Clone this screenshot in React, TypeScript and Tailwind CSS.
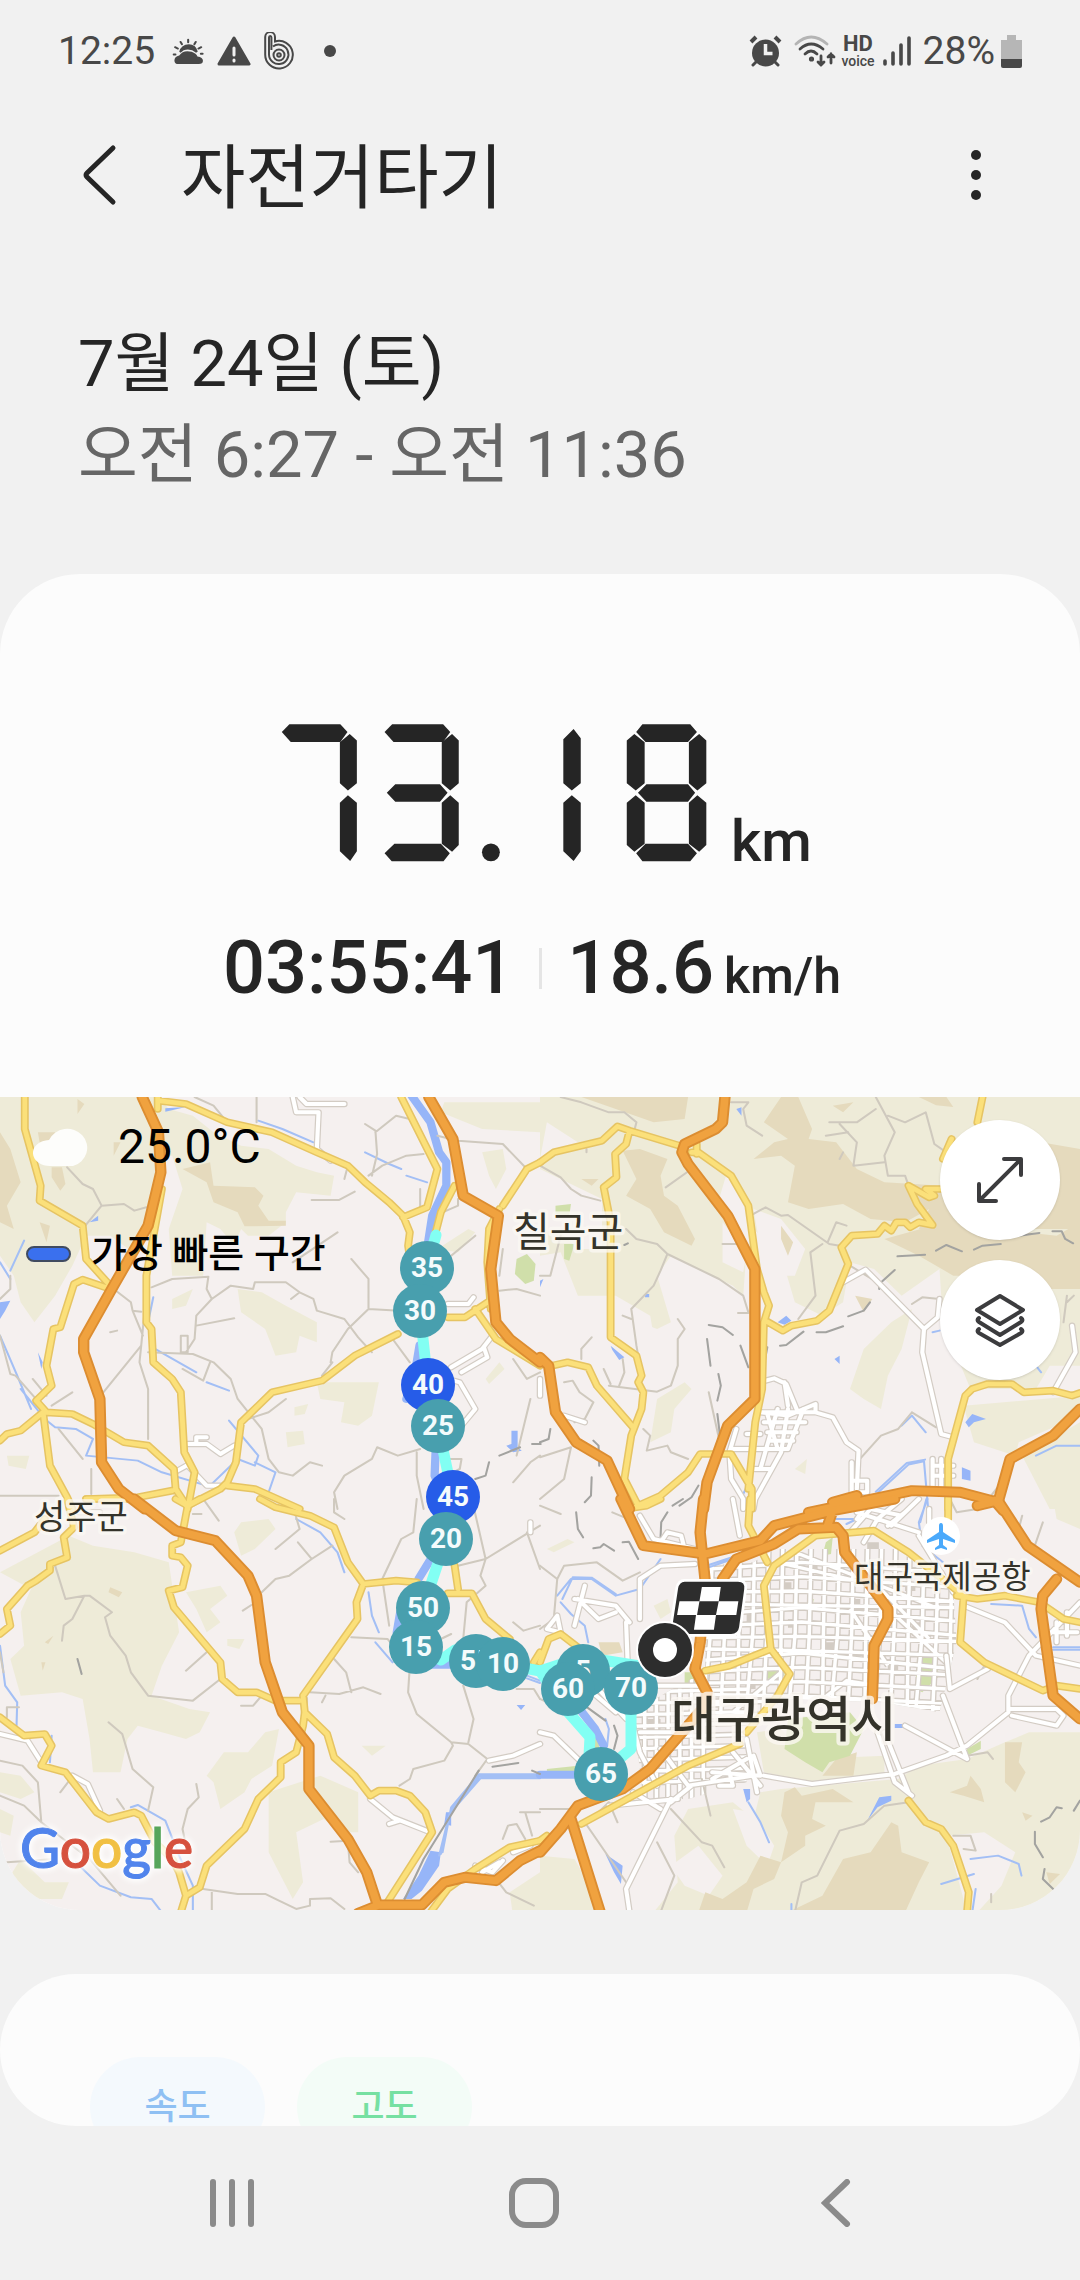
import React from "react";

const FONT = "font-[Roboto,'Noto_Sans_CJK_KR',sans-serif]";

/* ---------- map data ---------- */

interface Tile {
  transform: string;
  hills: string;
  bare?: string;
  ridges: string;
  parks?: string;
  lakes: string;
  rivers: string;
  streams: string;
  lanes: string;
  rails: string;
  streets: string;
  roads: string;
  highways: string;
}

const cityGrid = [
  ...Array.from({ length: 18 }, (_, i) => `M${500 + i * 41} 150L${495 + i * 41} 400L${474 + i * 41 + (i % 3) * 9} 660`),
  ...Array.from({ length: 14 }, (_, i) => `M470 ${212 + i * 34}L760 ${190 + i * 34 + (i % 4) * 9}L1240 ${224 + i * 34 + (i % 3) * 9}`),
  ...Array.from({ length: 7 }, (_, i) => `M${270 + i * 34} 540V900`),
  ...Array.from({ length: 9 }, (_, i) => `M260 ${580 + i * 34}L600 ${570 + i * 34}`),
  "M690 190L980 260 1130 420M740 160L1160 330M560 640L700 520M980 300L1210 520M820 600L890 545 980 560M1010 500L900 330",
].join("");

const blocks = [
  "M520 240h30v26h-30z", "M600 340h28v30h-28z", "M700 250h30v30h-30z", "M720 360h26v26h-26z", "M830 430h30v24h-30z",
  "M900 300h30v26h-30z", "M780 200h26v26h-26z", "M1060 250h30v26h-30z", "M1080 370h26v40h-26z", "M1010 490h30v30h-30z",
  "M800 540h30v20h-30z", "M600 540h26v30h-26z", "M310 590h28v24h-28z", "M300 660h50v34h-50z", "M950 130h34v20h-34z",
].join("");

const tiles: Tile[] = [
  {
    transform: "translate(0 -8) scale(.3444 .3333)",
    hills:
      "M0 24H460L490 60 560 80 620 130 700 170 780 180 860 230 920 250 970 260 960 320 860 310 830 370 830 400 780 440 720 440 700 420 680 470 640 420 600 400 590 560 500 560 490 420 530 300 500 200 470 200 465 300 420 440 400 500 320 440 250 440 210 530 160 620 100 700 60 640 40 560 0 500ZM690 600L760 610 830 650 920 700 920 760 870 740 860 790 800 800 770 720 700 670ZM920 880L1100 880 1080 980 1040 1010 990 1000 1000 940 930 930ZM1290 40H1568V130L1400 120 1280 70ZM830 1030l50-5 5 40-50 10zM500 630l60-30-20 50-40 10zM1410 870l40-50 15 20-45 45zM1400 190l60-10 10 60-30 60-20-40zM20 1100h65l-10 40-50-10zM1270 480l90-60 20 10-50 60zM855 955l40-10-10 30-30 5z",
    ridges:
      "M0 130L30 180 60 280 20 350 40 420 0 400ZM530 240L610 220 620 290 740 295 765 320 750 350 780 395 830 395 830 410 710 412 690 370 620 340 600 280ZM150 235h30l10 50-15 20-25-40zM115 400l30 10-10 50zM225 30l20 15-20 30zM330 160h20l-20 40zM110 130h50v40l-40 20z",
    parks: "M1500 510l30-15 25 30-5 50-25 10-30-30z",
    lakes: "M260 400l25-20v15zM0 640l30-5-15 30-15 25zM1485 1025h18v50l12 10-25 5-20-20 15-5zM480 58l60-4-60 14zM110 790l14 30-4 20z",
    rivers: "M1195 20L1250 100 1275 190 1296 220 1296 290 1255 380 1240 480M1218 770L1205 850 1180 930M1265 1080L1262 1160 1300 1260",
    streams:
      "M70 455L30 545M445 625L430 700M60 900L130 990 160 1015 220 1020 270 1050 250 1100 400 1115 470 1150 600 1190M600 880L665 905M665 995L750 1100 740 1130 690 1110 610 1190M740 1120L800 1150 780 1210M1060 190L1130 225 1165 240M1180 260l60 20M750 95l70 25 90 40M0 740L50 860 90 960M450 780L570 850M0 520L30 570",
    lanes:
      "M195 235L240 285 270 300 295 350 360 345 390 365 425 355M295 350L240 420M565 24L620 50 660 100M745 24V100M1080 260L1095 195 1090 125 1060 105M1090 130L1150 80 1190 90M1070 260L1110 230 1180 200 1230 195M1000 270L1010 230M905 333H985L1030 308M1270 140L1330 155 1460 165 1530 240M440 595L500 570 605 563 600 600 615 630 570 680 565 750 540 790M615 630L670 590 735 600 740 580 830 580 870 610 910 630 920 665 1000 690 1040 745 1080 790M870 610L845 630M570 710L680 688M430 560L410 770 405 820 430 900V1050M330 600L380 640 385 665 410 668M385 665L415 740M410 770L300 910M430 790L560 795 620 820 670 870 690 930 760 1020 780 1110 810 1150M610 820L590 875 530 840M960 820L965 790 1010 720 1070 660 1160 665M1070 660V570L1020 510M830 930L780 970 720 990M935 860l30-40M850 520L980 430M0 740L30 855 45 860 130 960M170 1020L240 1110M265 1140V1215M0 1220H170M980 1260L970 1210 1000 1160 1080 1110 1095 1075 1155 1100 1220 1080M810 1150L850 1160 900 1120 935 1130M1220 300V370M1140 750L1190 820M1210 1090V1160L1230 1260M1460 480L1450 560M1450 605L1500 600 1568 620M1330 330v20l-45 20M1310 500l70-60M1490 810L1530 870 1568 850M1500 1100L1540 930M1490 1180L1540 1120 1568 1100M1300 1110h40l-5 30-20 10M320 730l20-5M95 870l40 50M150 950l60-40M30 560L30 600 0 630M525 740v50h20v-50z",
    rails: "M1420 1120L1410 1160 1380 1170M1450 1100L1510 1075M1545 1065h25",
    streets:
      "M850 24L860 70H925L920 180 960 215M870 24L890 45H1000M1300 645H1360L1375 625M1310 835L1400 780 1430 740M1340 850L1415 805 1405 775M1300 870L1335 880 1380 960 1340 1010M545 1065H600L640 1095 680 1070M570 1065V1045H600M545 1130L600 1190 640 1190M515 1145l35-20",
    roads:
      "M72 24V120L118 290 115 335 240 410 250 510 320 590M320 600L240 572 215 585 175 715 155 720 135 830 150 890 105 935 135 970 210 975 270 1005 360 1060 430 1070 505 1140 510 1200 545 1255M458 24V60M125 970L60 1025 20 1035 0 1055M125 970L145 1130 195 1225 210 1260M470 300L425 560V700L440 720 445 820 500 870 525 910 535 1090 565 1150 545 1260M460 35L540 45 660 100 790 130 920 190 1010 230 1060 280 1130 340 1170 380 1190 430 1185 470 1195 540M1165 24L1270 240 1240 355 1170 385M1320 290L1280 370 1265 430M1568 220L1530 240 1460 350M1450 360L1420 420 1415 520 1425 660M1155 735L1030 800 935 875 790 910 700 1000 685 1120 660 1180 640 1200 545 1250M1300 685H1350L1415 640M1380 660L1440 750 1568 830M250 1230L400 1225 500 1205M660 1190L740 1200 870 1260",
    highways:
      "M413 24L460 130 467 250 430 410 330 590 243 750 243 790 290 930 295 1120 345 1200 420 1260M1245 24L1315 150 1345 320 1447 380 1425 540 1440 700 1480 750 1568 820",
  },
  {
    transform: "translate(540 -8) scale(.3444 .3333)",
    hills:
      "M0 24H1568V830L1480 830 1440 900 1250 900 1170 700 1160 540 1050 620 970 540 900 520 880 640 820 680 740 640 700 500 620 420 600 320 540 260 520 330 600 480 590 620 560 590 380 500 340 560 250 620 110 620 60 490 0 500ZM210 590L340 560 380 700 340 720 240 680zM900 900l40-120 80-80 60-40-30 120-40 80-20 100-50-30zM320 1060L340 930 420 880 440 900 390 960 380 1030zM1230 950L1568 920V980L1390 1060 1380 1100 1260 1060ZM1400 1100L1568 1000V1260H1480zM740 1140l35-30-5 45z",
    bare: "M0 240L100 290 180 330V480L110 480 60 430 0 420ZM20 100l90 60 60-10-100 40-70 20zM620 360L700 390 770 480 740 560 700 560 640 480ZM530 400l70 90-10 60-60-30zM220 620l100 60 10 60-90 20z",
    ridges:
      "M120 24H430L420 90 330 100 220 60ZM700 24H750L790 120 780 150 860 160 920 240 1000 280 1170 290 1200 400 1130 360 1060 400 960 390 880 345 780 360 720 340 740 230 700 200 620 210 680 160 720 150 650 100ZM240 185L290 180 370 210 350 260 360 320 400 350 450 450 440 470 360 430 320 360 250 320 280 270ZM1000 450L1140 410 1230 410 1500 440 1568 400V600L1480 600 1420 560 1300 560 1200 560 1100 500ZM1400 150L1568 180V420H1100L1160 300ZM700 410l35 50-15 40-20-50zM915 620l50 10-25 40zM850 50l60-10-30 30zM120 270l50 0-20 20zM1100 24h80l20 30-50-5z",
    parks: "M45 350l45-5-5 35-40-5zM70 465h30l-15 50-15-5z",
    lakes: "M205 770l40 35-15 8-20-30zM690 700l25-20 15 15-20 12zM855 810l15-10v25zM1235 1000l20-25 40 15-35 10-15 15zM1225 1135l25 10v30l-25-5zM0 575l10-5-10 25zM570 60l15-5v25zM305 615h12v10h-12z",
    rivers: "",
    streams: "M980 1212L1070 1127 1115 1117 1127 1260M975 1208L1065 1122 1118 1112M1050 1010l30-30 40 50M1440 1100l60-30H1568M1440 830l15 20M1140 730l20-5M590 1215l10-20",
    lanes:
      "M60 24L120 40 200 70 245 70 280 100 275 120M365 295L440 240M0 230L60 265 90 300 120 320 175 335M250 420L280 450 340 465 370 495 520 570 590 620 605 670M370 495L350 545 330 590 265 660 280 770 285 800M620 375L655 355 700 380 720 378 840 465 870 470M820 465L785 490 800 620 750 690M835 460L860 400 890 410M975 24L1030 130 1000 200 1010 260H1060L1070 290M840 100H920L975 60M870 105L920 160 910 230 1000 220M830 140L895 130M1010 80L1060 100 1120 70 1145 165 1180 190M555 40H605L590 60 600 110 645 140M120 810V780L150 745M240 810L245 850 230 890M400 690L420 720 400 750V830L380 890 340 908 200 890M185 840l20 45M240 680l25 10M70 880L95 875 115 910 155 940 130 990 100 1000M300 1020L320 1040 310 1085 370 1070 380 1090 430 1110M0 1105L90 1075 70 1170 0 1230M490 910L520 1050M1080 645L1110 625 1160 630M1080 970L1150 1015M1080 970L1040 1020 990 1040 920 1120M1340 1180L1310 1220M1530 620L1520 700M1530 640l20-20M530 465h50M575 672h30M880 190l-10 20M900 530l80 50M135 180v10M60 440L30 560 0 560",
    rails:
      "M490 708L530 715 560 738M485 750L495 830M518 855L525 890 515 935M515 975L522 1035M582 770L605 835M660 775L652 820M697 770L715 768 765 728M803 730H830L880 712M895 682L940 665 958 640M985 600V585L1030 543M1038 502L1118 497M1150 485L1180 468 1225 487M1260 482L1285 470 1338 465M1488 427H1515L1525 450 1548 463M155 1055L170 1070 172 1130M150 1165L148 1220 130 1240M460 1190L440 1225 405 1250M30 1020L25 1050 0 1060M1390 440L1450 432M245 468l10-5",
    streets:
      "M880 580L945 542 1115 720 1110 790 1165 1035 1200 1045M1115 720L1155 685 1160 630M1490 910L1555 790 1545 710M655 875L680 868 715 885 745 960M640 970L720 980 800 945V970L850 985 890 1060 925 1085 920 1200M570 1020L550 1090 555 1170 590 1230V1260M645 970H800M650 1000H770M660 1030H745M560 1080H720M670 1055H735M690 960L640 1140M720 960L700 1090 625 1230 620 1260M765 960L720 1080M660 975L690 1080M610 1140H670M1140 1110V1200M1165 1110V1200M1140 1130H1200M1140 1160H1200M905 1120V1210H950V1175H905M0 870v50M70 980l60 20M600 1035h40M710 880l10 70",
    roads:
      "M0 220L40 190 180 155 225 112 260 125 420 175M260 125L250 165 218 195 222 265 185 295 205 400V745L280 800 295 860 285 880 300 910 295 960 265 1040 245 1170 285 1250M35 830L80 820 140 835 165 890 270 1015M440 190L460 190 555 260 605 350 630 540 650 610 665 650 650 700 645 900 625 1000 605 1200M455 165V195M655 695L705 725 730 710 805 695 840 665 895 525 875 475 905 440 980 435 1000 410 1020 425 1035 400 1060 400 1075 415 1100 400 1140 408 1095 345 1070 290 1130 325 1145 320 1120 300H1165M1285 24L1270 100M1195 150L1170 210M285 1250L350 1220 430 1150 465 1095H555L615 1200V1260M1185 1260V1110L1235 920 1255 900 1300 885 1370 885 1405 910 1490 905 1545 920 1568 912",
    highways:
      "M537 24L530 100 510 120 420 165 412 190 430 225 545 380 624 540V930L545 1010 485 1180 475 1260M0 805L25 830 45 970 105 1060 195 1115 260 1260M780 1270L1080 1205 1220 1210 1330 1240 1365 1110 1490 1040 1568 960M850 1240L920 1220M1320 1235L1345 1265",
  },
  {
    transform: "translate(0 402) scale(.3444 .3333)",
    hills:
      "M0 220L110 160 200 110 270 140 390 160 490 190 520 400 470 500 440 590 550 630 610 640 580 700 540 720 470 700 400 680 370 720 350 820 270 820 260 720 240 600 180 580 60 590 30 480 70 440 60 340 90 270zM700 70L780 60 800 90 740 150 700 170 680 100ZM540 280L640 260 660 290 610 330 640 370 600 400 570 330ZM600 830L650 760 720 760 770 700 810 690 790 800 730 840 710 880 640 930 620 850zM780 880L930 830 1040 880 1040 1000 990 1000 940 960 860 1000 880 1150 850 1200 780 1060ZM0 820L60 830 100 880 60 900 0 880ZM60 1080L130 1150 200 1150 180 1200 100 1200 30 1130ZM1480 1180l88-60V1240h-80zM1050 740h70l-40 30zM660 420h50l-15 30-35-10zM0 930L40 950 30 1010 0 1000z",
    ridges: "M320 265l35 15-10 15-30-15zM130 430l25-20-15 25zM120 490h12l-8 25z",
    lakes: "M1215 1130L1250 1055 1280 1060 1275 1100 1225 1175 1195 1200H1170ZM1500 618h25l-12 15zM1295 940l15 0v40l-20-5z",
    rivers: "M1248 185L1215 240M1162 340L1152 400M1250 497H1320",
    streams:
      "M0 440L15 560 50 610 48 680M150 710L145 790M380 925L400 918 480 965 520 1070 560 1160V1240M220 1090L290 1160 380 1195 440 1200 470 1240M1070 280L1080 350 1100 400M1090 430L1140 490M860 60L930 100 980 160 1000 220M1568 826H1390L1310 925 1285 1060M1568 832H1392L1310 932 1280 1065M1568 838H1395L1305 945 1275 1070M1530 530L1568 545M1530 538L1568 552",
    lanes:
      "M160 200L190 300 245 290 210 360 185 380 180 425M245 290H260L325 340 305 355 320 410 365 470 380 520 430 590 560 605 640 540M540 515L600 460M315 670L355 705 385 810 445 865 430 935M570 855L577 895 545 930 530 990 540 1040M700 620H735L760 590M705 335L730 318M760 280L800 240 840 230 905 180 965 140M865 130L905 180M970 0V40L1000 60M850 20L870 90 800 150M590 0L635 65M560 45h25M1210 0L1200 100 1165 120 1110 240 1130 380M1370 0L1390 90 1410 180 1395 230 1410 260 1355 310 1345 420M1410 180L1568 80M1330 200L1410 180M1020 415L1125 420 1190 500 1185 580 1210 645 1310 730 1360 735 1415 780 1380 830M1345 560L1375 660 1360 730M1310 730L1315 740 1290 785 1200 810 1190 840 1160 860M900 580L985 585 1055 565 1105 585M970 480L1005 520 1020 580M935 610l10-20M590 1170L690 1185H770L810 1205 860 1230 900 1220V1200L960 1198 1000 1230M615 1175V1240M0 785L65 800 110 850 120 970 260 1080 350 1190M0 890L70 920 120 970M20 1090L160 1080M175 880l30-40M340 900L360 930M960 1028L1010 1025 1015 1090 1040 1120M1510 940H1568M1525 940L1545 1010M1460 1020L1475 980 1500 975 1525 1020M1410 1100l60 80 80 40M1490 370L1520 395 1568 380M20 655V625H55M1530 100L1568 210M1500 570h50l18 30M1280 420l30-15M0 460l10 60",
    rails: "M1430 803L1505 792M1545 815L1568 825M1390 815L1230 1080 1175 1200M225 480L237 525",
    streets:
      "M0 705L80 725 120 790M210 830L255 855 290 935M1075 900L1140 955 1250 1000M1130 975L1160 965M1420 785L1490 770 1568 735M1540 70V100M885 600V640M230 40h60M1380 1100L1430 1120 1460 1085M1400 1120l50-30M1490 1060l50-20",
    roads:
      "M0 155L100 100 130 60M215 85L185 115 195 175 145 195 145 215 105 245 80 260 20 330 30 380 0 405M195 0L215 85M510 0L545 20 525 130 500 140 500 170 525 175 545 200 530 265 490 275 505 325 640 490 645 540 690 580H745L800 605 870 605M545 20L580 0M755 0L800 25 900 50 970 85 1010 190 1055 255 1150 245 1210 250M1055 255L1035 310 1038 360 880 590 885 640 880 680 860 760 815 790V835L750 900 710 990 600 1100 580 1165 540 1190 525 1240M885 640L950 705 970 775 1030 830 1075 890 1100 875H1150L1190 890 1235 940 1255 1000 1125 1210M1320 200L1330 270M1300 283H1370L1410 360 1480 420M0 655L70 710 130 705 150 740 120 800 190 820 280 940 315 960 390 940 410 950 450 1030 500 1080 520 1120 540 1190M1250 1240L1300 1170 1380 1110 1480 1045 1568 1025M1568 460L1550 490M250 0L400 0",
    highways:
      "M390 0L510 95 625 125 720 230 745 290 770 490 820 640 897 740V870L1010 1020 1065 1120 1095 1215M1040 1243L1100 1218H1225L1290 1150 1350 1135 1440 1145 1510 1085 1568 1055",
  },
  {
    transform: "translate(540 402) scale(.3444 .3333)",
    hills:
      "M430 930L560 910 620 960 640 880 700 870 1040 840 1100 800 1240 780 1350 730 1420 700 1568 700V1240H330L400 1150 390 1010ZM0 1070L100 1080 190 1240H0zM630 700L700 690 780 780 1000 770V820L800 850 650 820ZM1490 0H1568V90L1500 60ZM20 150l60-30 20 10-60 30zM330 320l40-20 10 40-30 20z",
    bare: "M1180 1010L1290 1000 1380 1060 1340 1160 1270 1240H1240zM380 1100l80-60 70 90-40 60-70-30zM560 930l60 10 60 100-20 60-60-60z",
    ridges:
      "M710 880L740 865 760 890 850 870 910 910 800 910 790 960 830 980 770 1010 770 1040 700 1090 680 1140 620 1170 600 1240H460L480 1180 530 1200 600 1150 640 1070 700 1090 720 1000 700 950ZM1020 970L1040 980 1050 1060 1130 1090 1100 1150 1060 1240H720L820 1190 880 1080 960 1060zM1190 880L1240 860 1250 830 1280 870 1290 910 1230 890zM1350 730h50l-10 60 20 30-30 60-30-30zM820 830L860 780 920 760 910 830zM1400 940l30 10-20 15zM170 430h60l10 30-60 10zM1470 1120l40 5-30 30z",
    parks:
      "M710 750L720 660 900 640 940 690 900 770 840 790 820 820 770 790ZM1095 470L1140 460 1160 530 1110 580 1090 570ZM650 510l60-15v35l-50 10zM830 130l20-15-5 50-25 5zM420 520h35v50l-35-5zM20 810l90-10v15l-90 5zM780 300h15l-5 25zM1240 750l40-25v25l-40 20zM150 715h25l-5 40h-20z",
    lakes: "M590 870h20v30l-10 10zM950 965L985 895 1020 890V905L980 925ZM190 1065L240 1100 235 1155 215 1120ZM1030 675h25v12h-25z",
    rivers: "M0 827H110M100 610L160 690 185 740",
    streams:
      "M50 290L90 240 150 240 220 290 290 270 350 180M60 310L90 345 130 380 140 430M65 300L95 235 150 236 220 285M490 205L560 180M490 198L560 174M860 60L920 60 890 75M1125 0L1100 70 1110 140 1170 190M1122 0L1104 70M1310 315L1400 320 1420 390 1440 415M1490 445H1568M1490 452H1568M0 540L30 560M190 660L200 690 195 740M605 910L640 970 665 1030M1250 1080L1330 1070 1390 1095 1398 1130M1165 1155L1260 1125M1265 1170L1255 1240M730 1240v-25",
    lanes:
      "M0 200L50 240 70 200 165 190 240 245 290 220M470 840L495 950M380 930L470 1030 500 1040 535 1105M340 1030L390 1130 350 1240M740 1240L760 1150 805 1130 870 995 940 975 1000 920 1070 910M1240 770L1300 760 1315 780M1200 1010L1250 1010 1265 1055 1230 1050M1400 50L1390 90M1460 70L1430 160M0 930H90M210 40L280 70 300 120M1310 1185V1210M130 970L250 1150M50 240L40 360 0 390M1190 0L1210 40 1270 30M1270 540L1290 500M0 20L60 45M130 980L200 910 225 970M0 600L80 640",
    rails:
      "M105 40L110 90 125 115M155 148L175 145 185 135 215 155M240 130L258 128 285 180M370 40L352 70 350 115M415 0l-30 20M1455 968L1480 955 1500 925 1515 928M1437 998V1035L1460 1075M1465 1110L1460 1140 1490 1170M1550 935l18-30M130 620l60 45M215 680l10 30-10 40",
    streets:
      "M650 830L790 855 1030 825 1180 770 1240 740 1360 640 1360 590 1420 470 1568 310M980 700L1030 850 1080 890M1000 700L1070 880M1360 630H1500L1520 650 1500 680 1370 650M1170 590L1240 780M1060 680L1240 780M1180 470L1190 570 1300 510M380 900L250 1170 260 1240M250 370L260 640 290 760 340 860M130 260L100 380M100 300L220 320 260 370M110 300l60 60 50-20M0 700L40 710 120 790M290 360V240L350 200 450 195M290 50L330 120 450 150M560 0L580 110M350 130l20-30 40 10 10 40M430 860L350 750M430 860L620 830M380 910L440 860M500 820L640 830M520 860H560L550 820M560 760L640 860M600 720L630 880M20 390L50 350 60 400ZM1230 320L1350 370 1440 470 1568 500M1480 400h80M1500 370V430M1530 340V410M920 40L1100 100M960 0L920 60M1050 0L980 60M1100 0L1020 80M900 100L960 30 1050 50M940 130L980 60M1010 80L1060 40M200 920L400 900M270 880L350 930M140 570L220 640M160 560L250 660M250 560H480M290 700H420M1100 110L1200 280M1130 30v40M640 830l-20-60M480 520V640M500 840l100-60",
    roads:
      "M0 490L25 420 60 405 110 445M275 25L310 20 350 0M610 0L605 80 660 190M480 515L550 500 670 450 650 260 680 200 800 110 970 95 1070 160 1230 290 1220 430 1290 490 1460 575 1500 560 1568 570M1210 290L1270 300 1350 290 1450 310 1520 360 1568 370M1185 0V60M670 450L725 525 690 590 600 700M580 735L430 800 200 930 120 975M1070 905L1120 970 1165 990 1200 1040 1245 1180 1240 1240M0 1025L20 1010",
    highways:
      "M235 0L300 140 480 165 640 125 680 80 850 35 1030 0M850 35L835 80M475 0L465 100 480 250 465 430 450 510 485 580 480 620 320 810 240 870 110 920 60 990 0 1060M90 960L175 1240M530 240L570 180 680 135 750 90 860 85 880 110 885 160 960 260 1010 330 1010 360 970 440 965 600M1270 20L1330 5 1415 140 1568 250M1500 240L1460 290 1455 330 1490 590 1568 660",
  },
];

const areas: { key: keyof Tile; fill: string }[] = [
  { key: "hills", fill: "#eeebd8" },
  { key: "bare", fill: "#f5f0ef" },
  { key: "ridges", fill: "#e5dabd" },
  { key: "parks", fill: "#d0dfaa" },
  { key: "lakes", fill: "#96b5f8" },
];

const lines: { key: keyof Tile; stroke: string; width: number }[] = [
  { key: "streams", stroke: "#a3bff5", width: 6 },
  { key: "rivers", stroke: "#96b5f8", width: 24 },
  { key: "lanes", stroke: "#cfc9be", width: 6 },
  { key: "rails", stroke: "#a3a3a0", width: 6 },
  { key: "streets", stroke: "#d3ccc4", width: 19 },
  { key: "streets", stroke: "#ffffff", width: 12 },
  { key: "roads", stroke: "#e6c463", width: 23 },
  { key: "roads", stroke: "#fbe07a", width: 14 },
  { key: "highways", stroke: "#dc8d31", width: 33 },
  { key: "highways", stroke: "#f0a23f", width: 22 },
];

const pins = [
  { km: 35, x: 427, y: 171 },
  { km: 30, x: 420, y: 214 },
  { km: 40, x: 428, y: 288, fast: true },
  { km: 25, x: 438, y: 329 },
  { km: 45, x: 453, y: 400, fast: true },
  { km: 20, x: 446, y: 442 },
  { km: 50, x: 423, y: 511 },
  { km: 15, x: 416, y: 550 },
  { km: 55, x: 476, y: 564 },
  { km: 10, x: 503, y: 567 },
  { km: 5, x: 583, y: 574 },
  { km: 60, x: 568, y: 592 },
  { km: 70, x: 631, y: 591 },
  { km: 65, x: 601, y: 677 },
];

function RouteMap() {
  return (
    <svg viewBox="0 0 1080 813" className="block w-full bg-[#f5f0ef]" role="img" aria-label="경로 지도">
      <clipPath id="city">
        <path d="M480 200L620 190 760 100 900 120 1000 120 1200 280 1210 430 1160 640 990 610 700 600 640 700 600 850 430 900 300 900 270 640 400 560 480 520Z" />
      </clipPath>
      {areas.map((a) => (
        <g key={a.key} fill={a.fill}>
          {tiles.map((t) => (
            <path key={t.transform} transform={t.transform} d={t[a.key] ?? ""} />
          ))}
        </g>
      ))}
      <g transform={tiles[3].transform} fill="none">
        <g clipPath="url(#city)">
          <path d={cityGrid} stroke="#d3ccc4" strokeWidth="18" />
          <path d={blocks} fill="#d3ccc4" />
          <path d={cityGrid} stroke="#fff" strokeWidth="10" />
        </g>
      </g>
      {lines.map((l) => (
        <g key={l.key + l.width} fill="none" stroke={l.stroke} strokeWidth={l.width} strokeLinejoin="round" strokeLinecap="round">
          {tiles.map((t) => (
            <path key={t.transform} transform={t.transform} d={t[l.key] ?? ""} />
          ))}
        </g>
      ))}

      {/* place names */}
      <g
        className={`${FONT} [paint-order:stroke]`}
        fill="#34332a"
        stroke="#fbf8f3"
        strokeOpacity="0.8"
        strokeLinejoin="round"
      >
        <text x="513" y="149" fontSize="40" strokeWidth="7">칠곡군</text>
        <text x="34" y="432" fontSize="34" strokeWidth="7">성주군</text>
        <text x="854" y="491" fontSize="32" strokeWidth="6">대구국제공항</text>
        <text x="671" y="640" fontSize="49" fontWeight="500" strokeWidth="8">대구광역시</text>
      </g>
      <circle cx="941" cy="439" r="19" fill="#fff" />
      <path
        d="M941 426c2 0 2 2 2 4v5l12 8v3l-12-4v6l4 3v2l-6-2-6 2v-2l4-3v-6l-12 4v-3l12-8v-5c0-2 0-4 2-4z"
        fill="#4aa9fb"
      />

      {/* route */}
      <path
        d="M436 138L427 171 420 214 428 288 438 329 453 400 446 442 423 511 416 550 441 563 455 553 503 567 540 574 568 615 590 640 588 677H601L631 652V591M540 574L583 560 665 573"
        fill="none"
        stroke="#82fff3"
        strokeWidth="11"
        strokeLinejoin="round"
        strokeLinecap="round"
      />
      {pins.map((p) => (
        <g key={p.km}>
          <circle cx={p.x} cy={p.y} r="27" fill={p.fast ? "#265ce8" : "#489fae"} />
          <text
            x={p.x}
            y={p.y + 9}
            textAnchor="middle"
            className={`${FONT} text-[28px] font-bold`}
            fill="#f4fbfc"
          >
            {p.km}
          </text>
        </g>
      ))}

      {/* finish flag and start point */}
      <g transform={tiles[3].transform}>
        <path
          d="M420 248H575Q596 248 593 270L578 385Q575 405 555 405H400Q380 405 384 383L401 268Q405 248 420 248Z"
          fill="#2d2d2d"
          stroke="#fff"
          strokeWidth="16"
          className="[paint-order:stroke]"
        />
        <path d="M470 264H525L519 307H463ZM405 307H463L456 348H398ZM519 307H576L570 348H511ZM453 348H511L505 392H447Z" fill="#fff" />
      </g>
      <circle cx="665" cy="553" r="29" fill="#fff" />
      <circle cx="665" cy="553" r="27" fill="#2d2d2d" />
      <circle cx="665" cy="553" r="12" fill="#fff" />

      {/* attribution */}
      <text
        x="20"
        y="771"
        fontSize="55"
        fontWeight="500"
        className="font-[Lato,sans-serif] [filter:drop-shadow(0_0_3px_#fff)_drop-shadow(0_0_3px_#fff)]"
      >
        <tspan fill="#5184ec" stroke="#5184ec">G</tspan>
        <tspan fill="#d6513e" stroke="#d6513e">o</tspan>
        <tspan fill="#f1c043" stroke="#f1c043">o</tspan>
        <tspan fill="#5184ec" stroke="#5184ec">g</tspan>
        <tspan fill="#57a55b" stroke="#57a55b">l</tspan>
        <tspan fill="#d6513e" stroke="#d6513e">e</tspan>
      </text>
    </svg>
  );
}

/* ---------- distance readout ---------- */

const topSegment = "M20 4H134L150 27 134 57H23L3 27Z";

function Distance() {
  return (
    <svg viewBox="180 100 960 418" preserveAspectRatio="none" className="h-[139px] w-[429px]" role="img" aria-label="73.18">
      <g fill="#252525">
        <path transform="translate(181 100)" d={topSegment} />
        <path d="M336 133L352 153V281L332 303 314 281V158ZM332 317L352 340V486L337 515 314 486V340Z" />
        <path transform="translate(411 100)" d={topSegment} />
        <path d="M565 133L580 153V281L561 303 542 281V158ZM561 317L580 340V467L565 487 542 463V340ZM438 284H538L555 310 538 337H438L419 310ZM436 463H540L560 492 546 516H430L414 492Z" />
        <ellipse cx="652" cy="489" rx="20" ry="27" />
        <path d="M837 118L853 146V281L833 303 814 281V149ZM833 317L853 340V486L837 515 814 486V340Z" />
        <path d="M991 104H1098L1113 127 1093 157H998L977 127ZM1118 133L1134 153V281L1114 303 1095 281V158ZM1114 317L1134 340V467L1118 487 1095 463V340ZM1000 284H1093L1109 310 1093 337H1000L981 310ZM998 463H1093L1113 492 1098 516H991L977 492ZM973 133L956 153V281L976 303 996 281V158ZM976 317L956 340V467L973 487 996 463V340Z" />
      </g>
    </svg>
  );
}

/* ---------- chrome ---------- */

function StatusBar() {
  return (
    <div className="flex h-[102px] items-center justify-between px-[58px] text-[39px] leading-[46px] text-[#484848]">
      <div className="flex items-center">
        <span>12:25</span>
        <svg viewBox="498 110 96 82" preserveAspectRatio="none" className="ml-[17px] h-[27px] w-[33px]" fill="#484848">
          <path d="M505 178q0-12 14-15 12-18 36-11 14 5 17 14 16 2 16 13 0 10-12 10H517q-12 0-12-11z" />
          <path d="M519 152q6-23 28-23 20 0 26 22l-5 4q-16-15-36-8l-9 8z" />
          <path
            d="M545 115v8M523 122l4 7M567 122l-4 7M507 138l8 4M583 138l-8 4M503 160h5M587 158h-5"
            stroke="#484848"
            strokeWidth="6"
            strokeLinecap="round"
          />
        </svg>
        <svg viewBox="0 0 34 30" className="ml-[12px] h-[30px] w-[34px]">
          <path d="M17 2L32 28H2z" fill="#484848" stroke="#484848" strokeWidth="3" strokeLinejoin="round" />
          <path d="M17 12v7M17 24v1" stroke="#f1f1f1" strokeWidth="3" strokeLinecap="round" />
        </svg>
        <svg viewBox="0 0 30 38" className="ml-[13px] h-[38px] w-[30px]" fill="none" stroke="#484848" strokeWidth="2">
          <path d="M11 9.500A13.800 13.800 0 1 1 1.200 22.500V5a4.900 4.900 0 0 1 9.800 0z" />
          <path d="M9 14.500A9.700 9.700 0 1 1 5 22.500V5.500q0-1.500 1.200-1.500t1.200 1.500V18" />
          <circle cx="15" cy="23" r="5.500" />
          <circle cx="15" cy="23" r="1.800" />
        </svg>
        <span className="ml-[30px] size-3 rounded-full bg-[#484848]" />
      </div>
      <div className="flex items-center">
        <svg viewBox="0 0 33 32" className="h-8 w-[33px]" stroke="#484848" fill="none">
          <circle cx="16.500" cy="18" r="13.500" fill="#484848" stroke="none" />
          <path d="M2 7l5-5M31 7l-5-5" strokeWidth="4" />
          <path d="M4 30l4-4M29 30l-4-4" strokeWidth="3" strokeLinecap="round" />
          <path d="M16.500 9v9.500h7" stroke="#f1f1f1" strokeWidth="3.500" />
        </svg>
        <svg viewBox="0 0 42 33" className="ml-3 h-[33px] w-[42px]" fill="none" stroke="#484848" strokeWidth="2.800" strokeLinecap="round">
          <path d="M2 9Q17-5 33 9" stroke="#b4b4b4" />
          <path d="M6 14Q17 4 29 14M11 19Q17 13 23 19" />
          <circle cx="17.500" cy="24" r="1.200" />
          <path d="M27 21v9M24 27l3 3 3-3M37 28v-9M34 22l3-3 3 3" />
        </svg>
        <span className="ml-[5px] flex flex-col items-center">
          <span className="text-[22px] leading-[20px] font-bold">HD</span>
          <span className="text-[14px] leading-[14px] font-medium">voice</span>
        </span>
        <svg viewBox="0 0 28 32" className="ml-2 h-8 w-7" stroke="#484848" strokeWidth="3.600" strokeLinecap="round">
          <path d="M2 26v3M10 18v11M18 10v19M26 3v26" />
        </svg>
        <span className="ml-[12px]">28%</span>
        <svg viewBox="0 0 21 33" className="ml-[6px] h-[33px] w-[21px]">
          <path d="M6 0h9v5h6v19H0V5h6z" fill="#b6b6b6" />
          <path d="M0 24h21v7q0 2-2 2H2q-2 0-2-2z" fill="#484848" />
        </svg>
      </div>
    </div>
  );
}

function RoundButton({ label, children }: { label: string; children: React.ReactNode }) {
  return (
    <button aria-label={label} className="flex size-[120px] items-center justify-center rounded-full bg-white shadow-sm">
      {children}
    </button>
  );
}

export default function App() {
  return (
    <div className={`min-h-screen bg-[#f1f1f1] text-[#252525] ${FONT}`}>
      <StatusBar />

      <header className="flex h-[146px] items-center pr-[88px] pl-[71px]">
        <button aria-label="뒤로" className="p-3">
          <svg viewBox="0 0 34 62" className="h-[62px] w-[34px]" fill="none" stroke="#252525" strokeWidth="5" strokeLinecap="round" strokeLinejoin="round">
            <path d="M30 4L4 29Q2 31 4 33L30 58" />
          </svg>
        </button>
        <h1 className="ml-[52px] flex-1 pt-2 text-[70px] leading-[104px]">자전거타기</h1>
        <button aria-label="옵션 더보기" className="flex flex-col gap-[10px] p-[11px]">
          <span className="size-[10px] rounded-full bg-[#252525]" />
          <span className="size-[10px] rounded-full bg-[#252525]" />
          <span className="size-[10px] rounded-full bg-[#252525]" />
        </button>
      </header>

      <section className="px-[78px] pt-[71px] pb-[73px] text-[65px] leading-[91px]">
        <p>7월 24일 (토)</p>
        <p className="text-[#666]">오전 6:27 - 오전 11:36</p>
      </section>

      <main>
        <section className="overflow-hidden rounded-[80px] bg-[#fcfcfc]">
          <div className="flex items-end justify-center pt-[149px] pl-3">
            <Distance />
            <span className="ml-[22px] text-[58px] leading-[42px] font-medium">km</span>
          </div>
          <div className="flex items-center justify-center pt-[62px] pr-4 pb-[85px] font-medium">
            <span className="text-[74px] leading-[88px]">03:55:41</span>
            <span className="mx-[25px] h-[41px] w-[3px] bg-[#e5e5e5]" />
            <p className="text-[74px] leading-[88px]">
              18.6<span className="ml-[10px] text-[50px] leading-[50px]">km/h</span>
            </p>
          </div>

          <div className="relative">
            <RouteMap />
            <div className="absolute top-[22px] left-[26px] text-black">
              <div className="flex items-center gap-[29px]">
                <svg viewBox="0 0 56 40" className="ml-[7px] h-10 w-14">
                  <path d="M18 39a17 13 0 0 1-2-26A20 19 0 1 1 40 39z" fill="#fdfdfb" />
                </svg>
                <span className="text-[48px] leading-[56px]">25.0°C</span>
              </div>
              <div className="mt-[51px] flex items-center gap-[20px]">
                <span className="h-4 w-[45px] rounded-full border-2 border-[#414b60] bg-[#3a70ee]" />
                <span className="text-[39px] leading-[56px] font-medium">가장 빠른 구간</span>
              </div>
            </div>
            <div className="absolute top-[23px] right-5 flex flex-col gap-5">
              <RoundButton label="지도 확대">
                <svg viewBox="0 0 48 48" className="size-12" fill="none" stroke="#3c3c3e" strokeWidth="4" strokeLinecap="round" strokeLinejoin="round">
                  <path d="M4 44L44 4M28 3H45V19M3 28V45H20" />
                </svg>
              </RoundButton>
              <RoundButton label="지도 유형">
                <svg viewBox="0 0 52 54" className="h-[54px] w-[52px]" fill="none" stroke="#3c3c3e" strokeWidth="4" strokeLinecap="round" strokeLinejoin="round">
                  <path d="M26 3L49 17 26 31 3 17Z" />
                  <path d="M5 25q-3 2 0 4L26 42 47 29q3-2 0-4M5 36q-3 2 0 4L26 52 47 40q3-2 0-4" />
                </svg>
              </RoundButton>
            </div>
          </div>
        </section>

        <section className="mt-16 flex h-[152px] gap-8 overflow-hidden rounded-[80px] bg-[#fcfcfc] px-[90px] pt-[83px] text-[36px] font-medium">
          <button className="h-[100px] w-[175px] shrink-0 rounded-full bg-[#f4f9fd] text-[#8fc0f3]">속도</button>
          <button className="h-[100px] w-[175px] shrink-0 rounded-full bg-[#f3fcf7] text-[#76e0a2]">고도</button>
        </section>
      </main>

      <nav className="grid h-[153px] grid-cols-3 items-center justify-items-center pr-[93px] pl-[81px]">
        <button aria-label="최근 앱" className="p-4">
          <svg viewBox="0 0 46 48" className="h-12 w-[46px]" stroke="#8b8b8b" strokeWidth="6" strokeLinecap="round">
            <path d="M4 3V45M23 3V45M42 3V45" />
          </svg>
        </button>
        <button aria-label="홈" className="p-4">
          <svg viewBox="0 0 52 52" className="size-[52px]" fill="none" stroke="#8b8b8b" strokeWidth="6">
            <rect x="4" y="4" width="44" height="44" rx="14" />
          </svg>
        </button>
        <button aria-label="뒤로 가기" className="p-4">
          <svg viewBox="0 0 30 48" className="h-12 w-[30px]" fill="none" stroke="#8b8b8b" strokeWidth="6" strokeLinecap="round">
            <path d="M26 3L4 24 26 45" />
          </svg>
        </button>
      </nav>
    </div>
  );
}
